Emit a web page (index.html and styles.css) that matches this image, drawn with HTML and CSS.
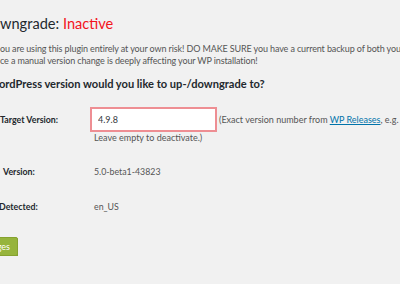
FILE: index.html
```html
<!DOCTYPE html>
<html>
<head>
<meta charset="utf-8">
<link rel="stylesheet" href="styles.css">
</head>
<body>
<div class="wrap">
  <h1 class="title">wngrade: <span class="status">Inactive</span></h1>
  <p class="notice"><span class="line">ou are using this plugin entirely at your own risk! DO MAKE SURE you have a current backup of both your files and database,</span><span class="line line2">ce a manual version change is deeply affecting your WP installation!</span></p>
  <h2 class="question">ordPress version would you like to up-/downgrade to?</h2>
  <div class="form-table">
    <div class="label lbl-target">Target Version:</div>
    <div class="field">
      <div class="input-row"><input class="version-input" type="text" value="4.9.8"><span class="desc">(Exact version number from <a href="#">WP Releases</a>, e.g. 4.9.8.</span></div>
      <div class="desc desc2">Leave empty to deactivate.)</div>
    </div>
    <div class="label lbl-current">Version:</div>
    <div class="field value">5.0-beta1-43823</div>
    <div class="label lbl-lang">Detected:</div>
    <div class="field value value-lang">en_US</div>
  </div>
  <div class="submit"><button class="button-primary">ges</button></div>
</div>
</body>
</html>
```
FILE: styles.css
```css
html, body {
  margin: 0;
  padding: 0;
  background: #f1f1f1;
  width: 400px;
  height: 284px;
  overflow: hidden;
}
.wrap {
  font-family: Lato, "Open Sans", sans-serif;
  color: #444;
  width: 400px;
  overflow: hidden;
}
.title {
  margin: 14px 0 0 0;
  font-size: 14.6px;
  font-weight: 400;
  line-height: 19px;
  color: #23282d;
  white-space: nowrap;
}
.status { color: #f3141b; }
.notice {
  margin: 10px 0 0 0;
  font-size: 9px;
  letter-spacing: -0.12px;
  line-height: 12px;
  color: #555;
  white-space: nowrap;
}
.line { display: block; }
.question {
  margin: 10px 0 0 -1px;
  font-size: 11.1px;
  font-weight: 700;
  line-height: 14px;
  color: #23282d;
  white-space: nowrap;
}
.form-table {
  display: grid;
  grid-template-columns: 90px 1fr;
  margin-top: 16px;
  font-size: 8.8px;
  line-height: 13px;
}
.label {
  font-weight: 700;
  color: #23282d;
  white-space: nowrap;
}
.lbl-target { padding-top: 6px; }
.lbl-current { padding: 21px 0 0 3px; }
.lbl-lang { padding-top: 22px; margin-left: -1px; }
.field { color: #555; white-space: nowrap; }
.value { padding: 21px 0 0 4px; }
.value-lang { padding-top: 22px; }
.input-row { display: flex; align-items: center; }
.version-input {
  box-sizing: border-box;
  width: 127px;
  height: 25px;
  margin: 0;
  padding: 0 6px;
  border: 2px solid #ee8e93;
  background: #fff;
  font-family: inherit;
  font-size: 9px;
  color: #32373c;
  outline: none;
}
.desc { margin-left: 2px; font-size: 9px; }
.desc2 { margin: -1px 0 0 4px; }
.desc a { color: #0073aa; text-decoration: underline; }
.submit { margin-top: 24px; }
.button-primary {
  display: block;
  margin-left: -36px;
  width: 54px;
  height: 19px;
  padding: 0 7px 0 0;
  text-align: right;
  background: #96b43c;
  border: 1px solid #86a22f;
  border-radius: 2px;
  color: #fff;
  font-family: inherit;
  font-size: 9px;
  line-height: 17px;
  box-shadow: 0 1px 0 #7c9530;
}
```
